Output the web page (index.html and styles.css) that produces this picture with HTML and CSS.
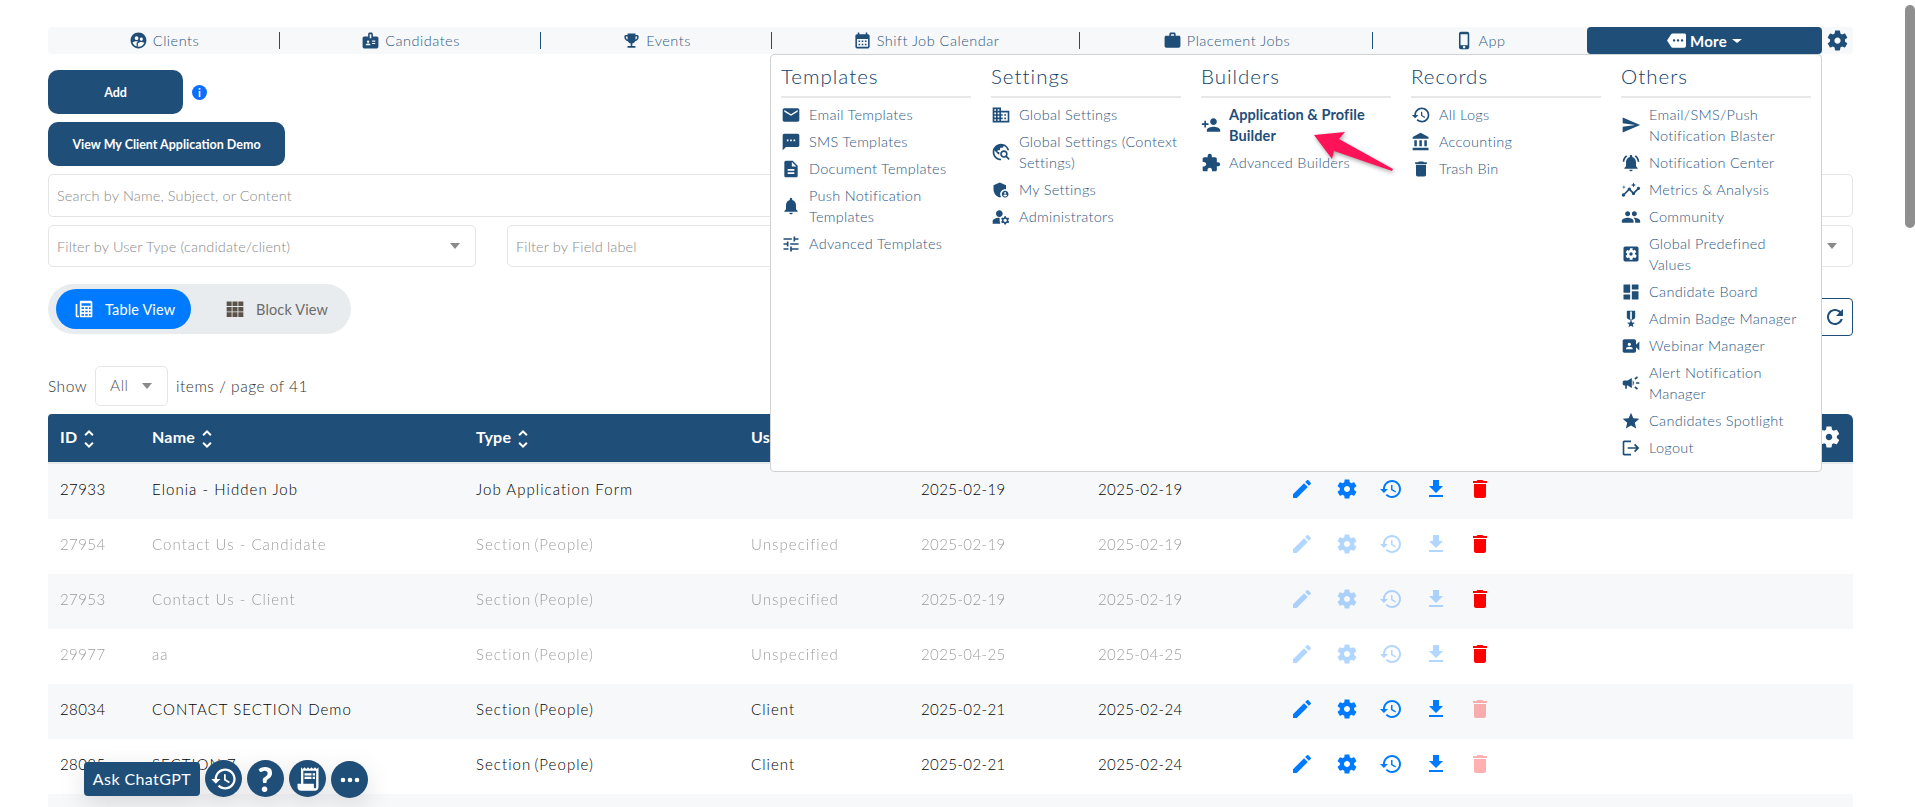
FILE: index.html
```html
<!DOCTYPE html>
<html lang="en">
<head>
<meta charset="utf-8">
<title>Application Builders</title>
<link rel="stylesheet" href="styles.css">
</head>
<body>
<svg class="sprite" aria-hidden="true">
<symbol id="i-clients" viewBox="0 0 24 24"><path d="M11.99 2c-5.52 0-10 4.48-10 10s4.48 10 10 10 10-4.48 10-10-4.48-10-10-10zm3.61 6.34c1.07 0 1.93.86 1.93 1.93 0 1.07-.86 1.93-1.93 1.93-1.07 0-1.93-.86-1.93-1.93-.01-1.07.86-1.93 1.93-1.93zm-6-1.58c1.3 0 2.36 1.06 2.36 2.36 0 1.3-1.06 2.36-2.36 2.36s-2.36-1.06-2.36-2.36c0-1.31 1.05-2.36 2.36-2.36zm0 9.13v3.75c-2.4-.75-4.3-2.6-5.14-4.96 1.05-1.12 3.67-1.69 5.14-1.69.53 0 1.2.08 1.9.22-1.64.87-1.9 2.02-1.9 2.68zM11.99 20c-.27 0-.53-.01-.79-.04v-4.07c0-1.42 2.94-2.13 4.4-2.13 1.07 0 2.92.39 3.84 1.15-1.17 2.97-4.06 5.09-7.45 5.09z"/></symbol>
<symbol id="i-badge" viewBox="0 0 24 24"><path d="M20 7h-5V4c0-1.1-.9-2-2-2h-2c-1.1 0-2 .9-2 2v3H4c-1.1 0-2 .9-2 2v11c0 1.1.9 2 2 2h16c1.1 0 2-.9 2-2V9c0-1.1-.9-2-2-2zM9 12c.83 0 1.5.67 1.5 1.5S9.83 15 9 15s-1.5-.67-1.5-1.5S8.17 12 9 12zm3 6H6v-.75c0-1 2-1.5 3-1.5s3 .5 3 1.5V18zm1-9h-2V4h2v5zm5 7.5h-4V15h4v1.5zm0-3h-4V12h4v1.5z"/></symbol>
<symbol id="i-trophy" viewBox="0 0 24 24"><path d="M19 5h-2V3H7v2H5c-1.1 0-2 .9-2 2v1c0 2.55 1.92 4.63 4.39 4.94.63 1.5 1.98 2.63 3.61 2.96V19H7v2h10v-2h-4v-3.1c1.63-.33 2.98-1.46 3.61-2.96C19.08 12.63 21 10.55 21 8V7c0-1.1-.9-2-2-2zM5 8V7h2v3.82C5.84 10.4 5 9.3 5 8zm14 0c0 1.3-.84 2.4-2 2.82V7h2v1z"/></symbol>
<symbol id="i-calendar" viewBox="0 0 24 24"><path d="M19 4h-1V2h-2v2H8V2H6v2H5c-1.1 0-2 .9-2 2v14c0 1.1.9 2 2 2h14c1.1 0 2-.9 2-2V6c0-1.1-.9-2-2-2zm0 16H5V10h14v10zM9 14H7v-2h2v2zm4 0h-2v-2h2v2zm4 0h-2v-2h2v2zm-8 4H7v-2h2v2zm4 0h-2v-2h2v2zm4 0h-2v-2h2v2z"/></symbol>
<symbol id="i-work" viewBox="0 0 24 24"><path d="M20 6h-4V4c0-1.11-.89-2-2-2h-4c-1.11 0-2 .89-2 2v2H4c-1.11 0-1.99.89-1.99 2L2 19c0 1.11.89 2 2 2h16c1.11 0 2-.89 2-2V8c0-1.11-.89-2-2-2zm-6 0h-4V4h4v2z"/></symbol>
<symbol id="i-phone" viewBox="0 0 24 24"><path d="M15.5 1h-8C6.12 1 5 2.12 5 3.5v17C5 21.88 6.12 23 7.5 23h8c1.38 0 2.5-1.12 2.5-2.5v-17C18 2.12 16.88 1 15.5 1zm-4 21c-.83 0-1.5-.67-1.5-1.5s.67-1.5 1.5-1.5 1.5.67 1.5 1.5-.67 1.5-1.5 1.5zm4.5-4H7V4h9v14z"/></symbol>
<symbol id="i-more" viewBox="0 0 24 24"><path d="M22 3H7c-.69 0-1.23.35-1.59.88L0 12l5.41 8.11c.36.53.9.89 1.59.89h15c1.1 0 2-.9 2-2V5c0-1.1-.9-2-2-2zM9 13.5c-.83 0-1.5-.67-1.5-1.5s.67-1.5 1.5-1.5 1.5.67 1.5 1.5-.67 1.5-1.5 1.5zm5 0c-.83 0-1.5-.67-1.5-1.5s.67-1.5 1.5-1.5 1.5.67 1.5 1.5-.67 1.5-1.5 1.5zm5 0c-.83 0-1.5-.67-1.5-1.5s.67-1.5 1.5-1.5 1.5.67 1.5 1.5-.67 1.5-1.5 1.5z"/></symbol>
<symbol id="i-gear" viewBox="0 0 24 24"><path d="M19.14 12.94c.04-.3.06-.61.06-.94 0-.32-.02-.64-.07-.94l2.03-1.58c.18-.14.23-.41.12-.61l-1.92-3.32c-.12-.22-.37-.29-.59-.22l-2.39.96c-.5-.38-1.03-.7-1.62-.94l-.36-2.54c-.04-.24-.24-.41-.48-.41h-3.84c-.24 0-.43.17-.47.41l-.36 2.54c-.59.24-1.13.57-1.62.94l-2.39-.96c-.22-.08-.47 0-.59.22L2.74 8.87c-.12.21-.08.47.12.61l2.03 1.58c-.05.3-.09.63-.09.94s.02.64.07.94l-2.03 1.58c-.18.14-.23.41-.12.61l1.92 3.32c.12.22.37.29.59.22l2.39-.96c.5.38 1.03.7 1.62.94l.36 2.54c.05.24.24.41.48.41h3.84c.24 0 .44-.17.47-.41l.36-2.54c.59-.24 1.13-.56 1.62-.94l2.39.96c.22.08.47 0 .59-.22l1.92-3.32c.12-.22.07-.47-.12-.61l-2.01-1.58zM12 15c-1.65 0-3-1.35-3-3s1.35-3 3-3 3 1.35 3 3-1.35 3-3 3z"/></symbol>
<symbol id="i-email" viewBox="0 0 24 24"><path d="M20 4H4c-1.1 0-1.99.9-1.99 2L2 18c0 1.1.9 2 2 2h16c1.1 0 2-.9 2-2V6c0-1.1-.9-2-2-2zm0 4l-8 5-8-5V6l8 5 8-5v2z"/></symbol>
<symbol id="i-sms" viewBox="0 0 24 24"><path d="M20 2H4c-1.1 0-1.99.9-1.99 2L2 22l4-4h14c1.1 0 2-.9 2-2V4c0-1.1-.9-2-2-2zM9 11H7V9h2v2zm4 0h-2V9h2v2zm4 0h-2V9h2v2z"/></symbol>
<symbol id="i-doc" viewBox="0 0 24 24"><path d="M14 2H6c-1.1 0-1.99.9-1.99 2L4 20c0 1.1.89 2 1.99 2H18c1.1 0 2-.9 2-2V8l-6-6zm2 16H8v-2h8v2zm0-4H8v-2h8v2zm-3-5V3.5L18.5 9H13z"/></symbol>
<symbol id="i-bell" viewBox="0 0 24 24"><path d="M12 22c1.1 0 2-.9 2-2h-4c0 1.1.89 2 2 2zm6-6v-5c0-3.07-1.64-5.64-4.5-6.32V4c0-.83-.67-1.5-1.5-1.5s-1.5.67-1.5 1.5v.68C7.63 5.36 6 7.92 6 11v5l-2 2v1h16v-1l-2-2z"/></symbol>
<symbol id="i-tune" viewBox="0 0 24 24"><path d="M3 17v2h6v-2H3zM3 5v2h10V5H3zm10 16v-2h8v-2h-8v-2h-2v6h2zM7 9v2H3v2h4v2h2V9H7zm14 4v-2H11v2h10zm-6-4h2V7h4V5h-4V3h-2v6z"/></symbol>
<symbol id="i-domain" viewBox="0 0 24 24"><path d="M12 7V3H2v18h20V7H12zM6 19H4v-2h2v2zm0-4H4v-2h2v2zm0-4H4V9h2v2zm0-4H4V5h2v2zm4 12H8v-2h2v2zm0-4H8v-2h2v2zm0-4H8V9h2v2zm0-4H8V5h2v2zm10 12h-8v-2h2v-2h-2v-2h2v-2h-2V9h8v10zm-2-8h-2v2h2v-2zm0 4h-2v2h2v-2z"/></symbol>
<symbol id="i-explore" viewBox="0 0 24 24"><path d="M19.3 16.9c.4-.7.7-1.5.7-2.4 0-2.5-2-4.5-4.5-4.5S11 12 11 14.5s2 4.5 4.5 4.5c.9 0 1.7-.3 2.4-.7l3.2 3.2 1.4-1.4-3.2-3.2zm-3.8.1c-1.4 0-2.5-1.1-2.5-2.5s1.1-2.5 2.5-2.5 2.5 1.1 2.5 2.5-1.1 2.5-2.5 2.5zM12 20v2C6.48 22 2 17.52 2 12S6.48 2 12 2c4.84 0 8.87 3.44 9.8 8h-2.07c-.64-2.46-2.4-4.47-4.73-5.41V5c0 1.1-.9 2-2 2h-2v2c0 .55-.45 1-1 1H8v2h2v3H9l-4.79-4.79C4.08 10.79 4 11.38 4 12c0 4.41 3.59 8 8 8z"/></symbol>
<symbol id="i-shield" viewBox="0 0 24 24"><path d="M17 11c.34 0 .67.04 1 .09V6.27L10.5 3 3 6.27v4.91c0 4.54 3.2 8.79 7.5 9.82.55-.13 1.08-.32 1.6-.55-.69-.98-1.1-2.17-1.1-3.45 0-3.31 2.69-6 6-6zm0 2c-2.21 0-4 1.79-4 4s1.79 4 4 4 4-1.79 4-4-1.79-4-4-4zm0 1.38c.62 0 1.12.51 1.12 1.12s-.51 1.12-1.12 1.12-1.12-.51-1.12-1.12.5-1.12 1.12-1.12zm0 5.37c-.93 0-1.74-.46-2.24-1.17.05-.72 1.51-1.08 2.24-1.08s2.19.36 2.24 1.08c-.5.71-1.31 1.17-2.24 1.17z"/></symbol>
<symbol id="i-admin" viewBox="0 0 24 24"><path d="M10 12c2.21 0 4-1.79 4-4s-1.79-4-4-4-4 1.79-4 4 1.79 4 4 4zm-.67 1.01C6.6 13.13 2 14.5 2 17v3h9.26c-.75-1.33-1-3.9-.93-6.99zM20.75 16c0-.22-.03-.42-.06-.63l1.14-1.01-1-1.73-1.45.49c-.32-.27-.68-.48-1.08-.63L18 11h-2l-.3 1.49c-.4.15-.76.36-1.08.63l-1.45-.49-1 1.73 1.14 1.01c-.03.21-.06.41-.06.63s.03.42.06.63l-1.14 1.01 1 1.73 1.45-.49c.32.27.68.48 1.08.63L16 21h2l.3-1.49c.4-.15.76-.36 1.08-.63l1.45.49 1-1.73-1.14-1.01c.03-.21.06-.41.06-.63zM17 18c-1.1 0-2-.9-2-2s.9-2 2-2 2 .9 2 2-.9 2-2 2z"/></symbol>
<symbol id="i-personadd" viewBox="0 0 24 24"><path d="M15 12c2.21 0 4-1.79 4-4s-1.79-4-4-4-4 1.79-4 4 1.79 4 4 4zm-9-2V7H4v3H1v2h3v3h2v-3h3v-2H6zm9 4c-2.67 0-8 1.34-8 4v2h16v-2c0-2.66-5.33-4-8-4z"/></symbol>
<symbol id="i-puzzle" viewBox="0 0 24 24"><path d="M20.5 11H19V7c0-1.1-.9-2-2-2h-4V3.5C13 2.12 11.88 1 10.5 1S8 2.12 8 3.5V5H4c-1.1 0-1.99.9-1.99 2v3.8H3.5c1.49 0 2.7 1.21 2.7 2.7s-1.21 2.7-2.7 2.7H2V20c0 1.1.9 2 2 2h3.8v-1.5c0-1.49 1.21-2.7 2.7-2.7 1.49 0 2.7 1.21 2.7 2.7V22H17c1.1 0 2-.9 2-2v-4h1.5c1.38 0 2.5-1.12 2.5-2.5S21.88 11 20.5 11z"/></symbol>
<symbol id="i-history" viewBox="0 0 24 24"><path d="M13 3c-4.97 0-9 4.03-9 9H1l3.89 3.89.07.14L9 12H6c0-3.87 3.13-7 7-7s7 3.13 7 7-3.13 7-7 7c-1.93 0-3.68-.79-4.94-2.06l-1.42 1.42C8.27 19.99 10.51 21 13 21c4.97 0 9-4.03 9-9s-4.03-9-9-9zm-1 5v5l4.28 2.54.72-1.21-3.5-2.08V8H12z"/></symbol>
<symbol id="i-bank" viewBox="0 0 24 24"><path d="M4 10v7h3v-7H4zm6 0v7h3v-7h-3zM2 22h19v-3H2v3zm14-12v7h3v-7h-3zm-4.5-9L2 6v2h19V6l-9.5-5z"/></symbol>
<symbol id="i-trash" viewBox="0 0 24 24"><path d="M6 19c0 1.1.9 2 2 2h8c1.1 0 2-.9 2-2V7H6v12zM19 4h-3.5l-1-1h-5l-1 1H5v2h14V4z"/></symbol>
<symbol id="i-send" viewBox="0 0 24 24"><path d="M2.01 21L23 12 2.01 3 2 10l15 2-15 2z"/></symbol>
<symbol id="i-bellactive" viewBox="0 0 24 24"><path d="M7.58 4.08L6.15 2.65C3.75 4.48 2.17 7.3 2.03 10.5h2c.15-2.65 1.51-4.97 3.55-6.42zm12.39 6.42h2c-.15-3.2-1.73-6.02-4.12-7.85l-1.42 1.43c2.02 1.45 3.39 3.77 3.54 6.42zM18 11c0-3.07-1.64-5.64-4.5-6.32V4c0-.83-.67-1.5-1.5-1.5s-1.5.67-1.5 1.5v.68C7.63 5.36 6 7.92 6 11v5l-2 2v1h16v-1l-2-2v-5zm-6 11c.14 0 .27-.01.4-.04.65-.14 1.18-.58 1.44-1.18.1-.24.15-.5.15-.78h-4c.01 1.1.9 2 2.01 2z"/></symbol>
<symbol id="i-insights" viewBox="0 0 24 24"><path d="M21 8c-1.45 0-2.26 1.44-1.93 2.51l-3.55 3.56c-.3-.09-.74-.09-1.04 0l-2.55-2.55C12.27 10.45 11.46 9 10 9c-1.45 0-2.27 1.44-1.93 2.52l-4.56 4.55C2.44 15.74 1 16.55 1 18c0 1.1.9 2 2 2 1.45 0 2.26-1.44 1.93-2.51l4.55-4.56c.3.09.74.09 1.04 0l2.55 2.55C12.73 16.55 13.54 18 15 18c1.45 0 2.27-1.44 1.93-2.52l3.56-3.55c1.07.33 2.51-.48 2.51-1.93 0-1.1-.9-2-2-2zM15 9l.94-2.07L18 6l-2.06-.93L15 3l-.92 2.07L12 6l2.08.93zM3.5 11L4 9l2-.5L4 8l-.5-2L3 8l-2 .5L3 9z"/></symbol>
<symbol id="i-people" viewBox="0 0 24 24"><path d="M16 11c1.66 0 2.99-1.34 2.99-3S17.66 5 16 5c-1.66 0-3 1.34-3 3s1.34 3 3 3zm-8 0c1.66 0 2.99-1.34 2.99-3S9.66 5 8 5C6.34 5 5 6.34 5 8s1.34 3 3 3zm0 2c-2.33 0-7 1.17-7 3.5V19h14v-2.5c0-2.33-4.67-3.5-7-3.5zm8 0c-.29 0-.62.02-.97.05 1.16.84 1.97 1.97 1.97 3.45V19h6v-2.5c0-2.33-4.67-3.5-7-3.5z"/></symbol>
<symbol id="i-gearbox" viewBox="0 0 24 24"><path d="M12 10c-1.1 0-2 .9-2 2s.9 2 2 2 2-.9 2-2-.9-2-2-2zm7-7H5c-1.11 0-2 .9-2 2v14c0 1.1.89 2 2 2h14c1.11 0 2-.9 2-2V5c0-1.1-.89-2-2-2zm-1.75 9c0 .23-.02.46-.05.68l1.48 1.16c.13.11.17.3.08.45l-1.4 2.42c-.09.15-.27.21-.43.15l-1.74-.7c-.36.28-.76.51-1.18.69l-.26 1.85c-.03.17-.18.3-.35.3h-2.8c-.17 0-.32-.13-.35-.3L10.5 17c-.43-.18-.82-.41-1.18-.69l-1.74.7c-.16.06-.34 0-.43-.15l-1.4-2.42c-.09-.15-.05-.34.08-.45l1.48-1.16c-.03-.22-.05-.45-.05-.68 0-.23.02-.46.05-.68l-1.48-1.16c-.13-.11-.17-.3-.08-.45l1.4-2.42c.09-.15.27-.21.43-.15l1.74.7c.36-.28.76-.51 1.18-.69l.26-1.85c.03-.17.18-.3.35-.3h2.8c.17 0 .32.13.35.3L13.5 7c.43.18.82.41 1.18.69l1.74-.7c.16-.06.34 0 .43.15l1.4 2.42c.09.15.05.34-.08.45l-1.48 1.16c.03.22.05.45.05.68z"/></symbol>
<symbol id="i-dashboard" viewBox="0 0 24 24"><path d="M3 13h8V3H3v10zm0 8h8v-6H3v6zm10 0h8V11h-8v10zm0-18v6h8V3h-8z"/></symbol>
<symbol id="i-medal" viewBox="0 0 24 24"><path d="M17 10.43V2H7v8.43c0 .35.18.68.49.86l4.18 2.51-.99 2.34-3.41.29 2.59 2.24L9.07 22 12 20.23 14.93 22l-.78-3.33 2.59-2.24-3.41-.29-.99-2.34 4.18-2.51c.3-.18.48-.5.48-.86zm-4 1.8l-1 .6-1-.6V3h2v9.23z"/></symbol>
<symbol id="i-video" viewBox="0 0 24 24"><path d="M18 10.48V6c0-1.1-.9-2-2-2H4c-1.1 0-2 .9-2 2v12c0 1.1.9 2 2 2h12c1.1 0 2-.9 2-2v-4.48l4 3.98v-11l-4 3.98zM10 8c1.1 0 2 .9 2 2s-.9 2-2 2-2-.9-2-2 .9-2 2-2zm4 8H6v-.57c0-.81.48-1.53 1.22-1.85.85-.37 1.79-.58 2.78-.58.99 0 1.93.21 2.78.58.74.32 1.22 1.04 1.22 1.85V16z"/></symbol>
<symbol id="i-campaign" viewBox="0 0 24 24"><path d="M18 11v2h4v-2h-4zm-2 6.61c.96.71 2.21 1.65 3.2 2.39.4-.53.8-1.07 1.2-1.6-.99-.74-2.24-1.68-3.2-2.4-.4.54-.8 1.08-1.2 1.61zM20.4 5.6c-.4-.53-.8-1.07-1.2-1.6-.99.74-2.24 1.68-3.2 2.4.4.53.8 1.07 1.2 1.6.96-.72 2.21-1.65 3.2-2.4zM4 9c-1.1 0-2 .9-2 2v2c0 1.1.9 2 2 2h1v4h2v-4h1l5 3V6L8 9H4zm11.5 3c0-1.33-.58-2.53-1.5-3.35v6.69c.92-.81 1.5-2.01 1.5-3.34z"/></symbol>
<symbol id="i-star" viewBox="0 0 24 24"><path d="M12 17.27L18.18 21l-1.64-7.03L22 9.24l-7.19-.61L12 2 9.19 8.63 2 9.24l5.46 4.73L5.82 21z"/></symbol>
<symbol id="i-logout" viewBox="0 0 24 24"><path d="M17 7l-1.41 1.41L18.17 11H8v2h10.17l-2.58 2.58L17 17l5-5zM4 5h8V3H4c-1.1 0-2 .9-2 2v14c0 1.1.9 2 2 2h8v-2H4V5z"/></symbol>
<symbol id="i-edit" viewBox="0 0 24 24"><path d="M3 17.25V21h3.75L17.81 9.94l-3.75-3.75L3 17.25zM20.71 7.04c.39-.39.39-1.02 0-1.41l-2.34-2.34c-.39-.39-1.02-.39-1.41 0l-1.83 1.83 3.75 3.75 1.83-1.83z"/></symbol>
<symbol id="i-download" viewBox="0 0 24 24"><path d="M19 9h-4V3H9v6H5l7 7 7-7zM5 18v2h14v-2H5z"/></symbol>
<symbol id="i-refresh" viewBox="0 0 24 24"><path d="M17.65 6.35C16.2 4.9 14.21 4 12 4c-4.42 0-7.99 3.58-7.99 8s3.57 8 7.99 8c3.73 0 6.84-2.55 7.73-6h-2.08c-.82 2.33-3.04 4-5.65 4-3.31 0-6-2.69-6-6s2.69-6 6-6c1.66 0 3.14.69 4.22 1.78L13 11h7V4l-2.35 2.35z"/></symbol>
<symbol id="i-sort" viewBox="0 0 24 24"><path d="M12 5.83L15.17 9l1.41-1.41L12 3 7.41 7.59 8.83 9 12 5.83zm0 12.34L8.83 15l-1.41 1.41L12 21l4.59-4.59L15.17 15 12 18.17z"/></symbol>
<symbol id="i-table" viewBox="0 0 24 24"><path d="M4 6H2v14c0 1.1.9 2 2 2h2v-2H4V6zM8 2h12c1.1 0 2 .9 2 2v17c0 .6-.4 1-1 1H8c-.6 0-1-.4-1-1V3c0-.6.4-1 1-1zm1 3v3h11V5H9zm0 5v2h3v-2H9zm4.5 0v2h3v-2h-3zm4.5 0v2h2v-2h-2zM9 14v2h3v-2H9zm4.5 0v2h3v-2h-3zm4.5 0v2h2v-2h-2zM9 18v2h3v-2H9zm4.5 0v2h3v-2h-3zm4.5 0v2h2v-2h-2z"/></symbol>
<symbol id="i-grid" viewBox="0 0 24 24"><path d="M2 3h6v5.5H2zM9 3h6v5.5H9zM16 3h6v5.5h-6zM2 9.5h6V15H2zM9 9.5h6V15H9zM16 9.5h6V15h-6zM2 16h6v5.5H2zM9 16h6v5.5H9zM16 16h6v5.5h-6z"/></symbol>
<symbol id="i-receipt" viewBox="0 0 24 24"><path d="M19.5 3.5L18 2l-1.5 1.5L15 2l-1.5 1.5L12 2l-1.5 1.5L9 2 7.5 3.5 6 2v14H3v3c0 1.66 1.34 3 3 3h12c1.66 0 3-1.34 3-3V2l-1.5 1.5zM19 19c0 .55-.45 1-1 1s-1-.45-1-1v-3H8V5h11v14zM9 7h6v2H9zm7 0h2v2h-2zM9 10h6v2H9zm7 0h2v2h-2z"/></symbol>
<symbol id="i-dots" viewBox="0 0 24 24"><path d="M6 10a2 2 0 1 0 0 4 2 2 0 0 0 0-4zm12 0a2 2 0 1 0 0 4 2 2 0 0 0 0-4zm-6 0a2 2 0 1 0 0 4 2 2 0 0 0 0-4z"/></symbol>
</svg>

<div class="page">
  <nav class="nav">
    <a class="nav-item"><svg class="ico"><use href="#i-clients"/></svg>Clients</a>
    <a class="nav-item"><svg class="ico"><use href="#i-badge"/></svg>Candidates</a>
    <a class="nav-item"><svg class="ico"><use href="#i-trophy"/></svg>Events</a>
    <a class="nav-item"><svg class="ico"><use href="#i-calendar"/></svg>Shift Job Calendar</a>
    <a class="nav-item"><svg class="ico"><use href="#i-work"/></svg>Placement Jobs</a>
    <a class="nav-item nav-item-last"><svg class="ico"><use href="#i-phone"/></svg>App</a>
    <a class="nav-more"><svg class="ico"><use href="#i-more"/></svg>More<span class="caret caret-white"></span></a>
    <a class="nav-gear"><svg class="ico-gear"><use href="#i-gear"/></svg></a>

    <div class="menu">
      <section class="menu-col">
        <h3>Templates</h3>
        <ul>
          <li><svg class="ico-m"><use href="#i-email"/></svg><span>Email Templates</span></li>
          <li><svg class="ico-m"><use href="#i-sms"/></svg><span>SMS Templates</span></li>
          <li><svg class="ico-m"><use href="#i-doc"/></svg><span>Document Templates</span></li>
          <li><svg class="ico-m"><use href="#i-bell"/></svg><span>Push Notification<br>Templates</span></li>
          <li><svg class="ico-m"><use href="#i-tune"/></svg><span>Advanced Templates</span></li>
        </ul>
      </section>
      <section class="menu-col">
        <h3>Settings</h3>
        <ul>
          <li><svg class="ico-m"><use href="#i-domain"/></svg><span>Global Settings</span></li>
          <li><svg class="ico-m"><use href="#i-explore"/></svg><span>Global Settings (Context<br>Settings)</span></li>
          <li><svg class="ico-m"><use href="#i-shield"/></svg><span>My Settings</span></li>
          <li><svg class="ico-m"><use href="#i-admin"/></svg><span>Administrators</span></li>
        </ul>
      </section>
      <section class="menu-col">
        <h3>Builders</h3>
        <ul>
          <li class="active"><svg class="ico-m"><use href="#i-personadd"/></svg><span>Application &amp; Profile<br>Builder</span></li>
          <li><svg class="ico-m"><use href="#i-puzzle"/></svg><span>Advanced Builders</span></li>
        </ul>
      </section>
      <section class="menu-col">
        <h3>Records</h3>
        <ul>
          <li><svg class="ico-m"><use href="#i-history"/></svg><span>All Logs</span></li>
          <li><svg class="ico-m"><use href="#i-bank"/></svg><span>Accounting</span></li>
          <li><svg class="ico-m"><use href="#i-trash"/></svg><span>Trash Bin</span></li>
        </ul>
      </section>
      <section class="menu-col">
        <h3>Others</h3>
        <ul>
          <li><svg class="ico-m"><use href="#i-send"/></svg><span>Email/SMS/Push<br>Notification Blaster</span></li>
          <li><svg class="ico-m"><use href="#i-bellactive"/></svg><span>Notification Center</span></li>
          <li><svg class="ico-m"><use href="#i-insights"/></svg><span>Metrics &amp; Analysis</span></li>
          <li><svg class="ico-m"><use href="#i-people"/></svg><span>Community</span></li>
          <li><svg class="ico-m"><use href="#i-gearbox"/></svg><span>Global Predefined<br>Values</span></li>
          <li><svg class="ico-m"><use href="#i-dashboard"/></svg><span>Candidate Board</span></li>
          <li><svg class="ico-m"><use href="#i-medal"/></svg><span>Admin Badge Manager</span></li>
          <li><svg class="ico-m"><use href="#i-video"/></svg><span>Webinar Manager</span></li>
          <li><svg class="ico-m"><use href="#i-campaign"/></svg><span>Alert Notification<br>Manager</span></li>
          <li><svg class="ico-m"><use href="#i-star"/></svg><span>Candidates Spotlight</span></li>
          <li><svg class="ico-m"><use href="#i-logout"/></svg><span>Logout</span></li>
        </ul>
      </section>
    </div>
  </nav>

  <div class="add-row">
    <button class="btn btn-add">Add</button>
    <span class="info">i</span>
  </div>
  <button class="btn btn-demo">View My Client Application Demo</button>

  <div class="field field-search">Search by Name, Subject, or Content</div>

  <div class="filters">
    <div class="field">Filter by User Type (candidate/client)<span class="caret"></span></div>
    <div class="field">Filter by Field label</div>
    <div class="field"></div>
    <div class="field"><span class="caret"></span></div>
  </div>

  <div class="view-row">
    <div class="toggle">
      <span class="tg tg-on"><svg class="ico-t"><use href="#i-table"/></svg>Table View</span>
      <span class="tg tg-off"><svg class="ico-t"><use href="#i-grid"/></svg>Block View</span>
    </div>
    <button class="refresh"><svg class="ico-r"><use href="#i-refresh"/></svg></button>
  </div>

  <div class="pager">
    <span>Show</span>
    <span class="select">All<span class="caret"></span></span>
    <span>items / page of 41</span>
  </div>

  <table class="grid">
    <colgroup>
      <col class="c-id"><col class="c-name"><col class="c-type"><col class="c-user"><col class="c-d1"><col class="c-d2"><col>
    </colgroup>
    <thead>
      <tr>
        <th>ID<svg class="ico-s"><use href="#i-sort"/></svg></th>
        <th>Name<svg class="ico-s"><use href="#i-sort"/></svg></th>
        <th>Type<svg class="ico-s"><use href="#i-sort"/></svg></th>
        <th>User Type<svg class="ico-s"><use href="#i-sort"/></svg></th>
        <th>Created</th>
        <th>Updated</th>
        <th class="th-gear"><svg class="ico-hg"><use href="#i-gear"/></svg></th>
      </tr>
    </thead>
    <tbody>
      <tr>
        <td>27933</td><td>Elonia - Hidden Job</td><td>Job Application Form</td><td></td><td>2025-02-19</td><td>2025-02-19</td>
        <td class="acts"><div class="acts-in"><svg class="a a-b"><use href="#i-edit"/></svg><svg class="a a-b"><use href="#i-gear"/></svg><svg class="a a-b"><use href="#i-history"/></svg><svg class="a a-b"><use href="#i-download"/></svg><svg class="a a-r"><use href="#i-trash"/></svg></div></td>
      </tr>
      <tr class="muted">
        <td><span>27954</span></td><td><span>Contact Us - Candidate</span></td><td><span class="sect">Section (People)</span></td><td><span>Unspecified</span></td><td><span>2025-02-19</span></td><td><span>2025-02-19</span></td>
        <td class="acts"><div class="acts-in"><svg class="a a-b a-dim"><use href="#i-edit"/></svg><svg class="a a-b a-dim"><use href="#i-gear"/></svg><svg class="a a-b a-dim"><use href="#i-history"/></svg><svg class="a a-b a-dim"><use href="#i-download"/></svg><svg class="a a-r"><use href="#i-trash"/></svg></div></td>
      </tr>
      <tr class="muted">
        <td><span>27953</span></td><td><span>Contact Us - Client</span></td><td><span class="sect">Section (People)</span></td><td><span>Unspecified</span></td><td><span>2025-02-19</span></td><td><span>2025-02-19</span></td>
        <td class="acts"><div class="acts-in"><svg class="a a-b a-dim"><use href="#i-edit"/></svg><svg class="a a-b a-dim"><use href="#i-gear"/></svg><svg class="a a-b a-dim"><use href="#i-history"/></svg><svg class="a a-b a-dim"><use href="#i-download"/></svg><svg class="a a-r"><use href="#i-trash"/></svg></div></td>
      </tr>
      <tr class="muted">
        <td><span>29977</span></td><td><span>aa</span></td><td><span class="sect">Section (People)</span></td><td><span>Unspecified</span></td><td><span>2025-04-25</span></td><td><span>2025-04-25</span></td>
        <td class="acts"><div class="acts-in"><svg class="a a-b a-dim"><use href="#i-edit"/></svg><svg class="a a-b a-dim"><use href="#i-gear"/></svg><svg class="a a-b a-dim"><use href="#i-history"/></svg><svg class="a a-b a-dim"><use href="#i-download"/></svg><svg class="a a-r"><use href="#i-trash"/></svg></div></td>
      </tr>
      <tr>
        <td>28034</td><td>CONTACT SECTION Demo</td><td><span class="sect">Section (People)</span></td><td>Client</td><td>2025-02-21</td><td>2025-02-24</td>
        <td class="acts"><div class="acts-in"><svg class="a a-b"><use href="#i-edit"/></svg><svg class="a a-b"><use href="#i-gear"/></svg><svg class="a a-b"><use href="#i-history"/></svg><svg class="a a-b"><use href="#i-download"/></svg><svg class="a a-r a-dim"><use href="#i-trash"/></svg></div></td>
      </tr>
      <tr>
        <td>28035</td><td>SECTION 7</td><td><span class="sect">Section (People)</span></td><td>Client</td><td>2025-02-21</td><td>2025-02-24</td>
        <td class="acts"><div class="acts-in"><svg class="a a-b"><use href="#i-edit"/></svg><svg class="a a-b"><use href="#i-gear"/></svg><svg class="a a-b"><use href="#i-history"/></svg><svg class="a a-b"><use href="#i-download"/></svg><svg class="a a-r a-dim"><use href="#i-trash"/></svg></div></td>
      </tr>
      <tr><td colspan="7"></td></tr>
    </tbody>
  </table>
</div>

<svg class="pointer" viewBox="0 0 96 56" aria-hidden="true"><polygon points="8,13 39,10 33,17 87,47 86,49 28,29 26,37"/></svg>

<div class="float-bar">
  <button class="ask">Ask ChatGPT</button>
  <span class="round"><svg class="ico-f"><use href="#i-history"/></svg></span>
  <span class="round round-q">?</span>
  <span class="round"><svg class="ico-f"><use href="#i-receipt"/></svg></span>
  <span class="round round-low"><svg class="ico-f"><use href="#i-dots"/></svg></span>
</div>

<div class="scroll-thumb"></div>
</body>
</html>
```

FILE: styles.css
```css
* { box-sizing: border-box; }
html, body { margin: 0; height: 807px; overflow: hidden; background: #fff; }
body { font-family: Lato, "Noto Sans", sans-serif; color: #222; font-size: 15px; letter-spacing: .3px; }
.sprite { display: none; }
ul { list-style: none; margin: 0; padding: 0; }
button { font: inherit; letter-spacing: inherit; border: 0; padding: 0; }

.page { padding: 27px 62px 0 48px; display: flex; flex-direction: column; }

/* top nav */
.nav { position: relative; display: grid; grid-template-columns: 232px 261px 231px 308px 293px 214px 235px 31px; height: 27px; background: #f7f8fa; border-radius: 4px; }
.nav-item { position: relative; display: flex; align-items: center; justify-content: center; gap: 5px; color: #2f587f; font-size: 14.5px; font-weight: 300; letter-spacing: .5px; }
.nav-item::after { content: ""; position: absolute; right: 0; top: 5px; height: 17px; width: 1px; background: #1f4e79; }
.nav-item-last::after { display: none; }
.ico { width: 19px; height: 19px; fill: #1f4e79; flex: none; }
.nav-more { display: flex; align-items: center; justify-content: center; gap: 4px; background: #1f4e79; color: #fff; font-weight: 700; font-size: 15px; border-radius: 4px; }
.nav-more .ico { fill: #fff; width: 19px; height: 19px; }
.nav-gear { display: flex; align-items: center; justify-content: center; padding-right: 1px; }
.ico-gear { width: 25px; height: 25px; fill: #1f4e79; }

/* dropdown */
.menu { position: absolute; z-index: 10; left: 722px; top: 27px; width: 1052px; height: 418px; display: flex; gap: 20px; padding: 0 10px; background: #fff; border: 1px solid #d0d2d4; border-radius: 4px; }
.menu-col { width: 190px; flex: none; }
.menu-col h3 { margin: 0 0 6px; height: 43px; padding-top: 6px; font-size: 20.5px; line-height: 30px; font-weight: 300; color: #12406b; border-bottom: 2px solid #e6e7e9; letter-spacing: 1px; }
.menu-col ul { display: flex; flex-direction: column; gap: 6px; }
.menu-col li { display: flex; align-items: center; gap: 8px; font-size: 14.5px; font-weight: 300; line-height: 21px; color: #2f587f; white-space: nowrap; letter-spacing: .3px; }
.menu-col li.active { color: #1f4e79; font-weight: 700; letter-spacing: .1px; }
.ico-m { width: 20px; height: 20px; fill: #1f4e79; flex: none; }

/* buttons */
.add-row { display: flex; align-items: center; gap: 9px; margin-top: 16px; }
.btn { height: 44px; background: #1f4e79; color: #fff; border-radius: 10px; font-weight: 700; font-size: 12.5px; letter-spacing: 0; }
.btn-add { width: 135px; }
.btn-demo { width: 237px; margin-top: 8px; }
.info { width: 15px; height: 15px; border-radius: 50%; background: #0d6efd; color: #fff; font-size: 11px; line-height: 15px; text-align: center; font-weight: 700; }

/* fields */
.field { position: relative; height: 42px; display: flex; align-items: center; padding: 0 8px; border: 1px solid #e4e5e7; border-radius: 5px; color: #8a8a8a; font-size: 14.5px; font-weight: 300; letter-spacing: .15px; background: #fff; }
.field-search { height: 43px; margin-top: 8px; }
.filters { display: grid; grid-template-columns: repeat(4, 428px); column-gap: 31px; margin-top: 8px; }
.caret { display: inline-block; width: 0; height: 0; border-left: 5px solid transparent; border-right: 5px solid transparent; border-top: 6px solid #8a8a8a; }
.field .caret { position: absolute; right: 15px; top: 17px; }
.caret-white { border-top-color: #fff; border-left-width: 5px; border-right-width: 5px; border-top-width: 4px; margin-left: 1px; }

/* view toggle */
.view-row { display: flex; justify-content: space-between; align-items: flex-start; margin-top: 17px; height: 52px; }
.toggle { width: 303px; height: 50px; padding: 5px 8px; display: flex; background: #e9ecef; border-radius: 25px; }
.tg { display: flex; align-items: center; height: 40px; font-size: 14.5px; letter-spacing: .15px; }
.tg-on { width: 135px; padding-left: 18px; gap: 11px; color: #fff; background: #007bff; border-radius: 20px; }
.tg-off { padding-left: 34px; gap: 11px; color: #6b6b6b; }
.ico-t { width: 20px; height: 20px; flex: none; }
.tg-on .ico-t { fill: #fff; }
.tg-off .ico-t { fill: #5b5349; }
.refresh { width: 40px; height: 38px; margin-top: 14px; background: #fff; border: 1px solid #1f4e79; border-radius: 4px; display: flex; align-items: center; justify-content: flex-end; padding-right: 5px; }
.ico-r { width: 24px; height: 24px; fill: #1f4e79; }

/* pager */
.pager { display: flex; align-items: center; margin-top: 30px; height: 40px; gap: 8px; color: #333; font-size: 15.5px; font-weight: 300; letter-spacing: .5px; }
.select { position: relative; width: 73px; height: 40px; padding-left: 14px; line-height: 36px; border: 1px solid #e4e5e7; border-radius: 5px; color: #555; }
.select .caret { position: absolute; left: 46px; top: 16px; }

/* table */
.grid { width: 1805px; margin-top: 8px; border-collapse: separate; border-spacing: 0; table-layout: fixed; }
.c-id { width: 92px; } .c-name { width: 324px; } .c-type { width: 275px; } .c-user { width: 170px; } .c-d1 { width: 177px; } .c-d2 { width: 190px; }
.grid th { height: 50px; padding: 2px 0 0 12px; text-align: left; background: #1f4e79; color: #fff; font-weight: 700; font-size: 16px; letter-spacing: .2px; border-bottom: 2px solid #e6e8ea; white-space: nowrap; overflow: hidden; }
.grid th:last-child { border-top-right-radius: 6px; }
.grid th:first-child { border-top-left-radius: 4px; }
.ico-s { width: 24px; height: 24px; fill: #fff; vertical-align: middle; margin-left: 0; }
.grid th.th-gear { text-align: right; padding: 0 11px 2px 0; }
.ico-hg { width: 26px; height: 26px; fill: #fff; vertical-align: middle; }
.grid td { height: 55px; padding: 0 0 6px 12px; font-size: 15px; font-weight: 300; color: #000; white-space: nowrap; letter-spacing: .4px; }
.grid td:nth-child(2), .grid td:nth-child(3), .grid td:nth-child(4) { letter-spacing: 1.05px; }
.grid tbody tr:nth-child(odd) td { background: #f7f8fa; }
.muted td > span { opacity: .4; }
.sect { word-spacing: -2px; }
.grid td.acts { padding: 0 0 6px 0; }
.acts-in { display: grid; grid-template-columns: repeat(5, 44.5px); justify-items: center; align-items: center; margin-left: 4px; }
.a { width: 24px; height: 24px; }
.a-b { fill: #007bff; }
.a-r { fill: #ff0000; }
.a-dim { opacity: .3; }

/* annotation arrow */
.pointer { position: absolute; z-index: 20; left: 1306px; top: 122px; width: 96px; height: 56px; fill: #ff1358; filter: drop-shadow(1px 2px 2px rgba(0,0,0,.35)); }

/* floating bar */
.float-bar { position: fixed; z-index: 30; left: 84px; bottom: 10px; display: flex; align-items: center; gap: 5px; filter: drop-shadow(0 8px 12px rgba(0,0,0,.12)); }
.ask { width: 116px; height: 34px; background: #1f4e79; color: #fff; border-radius: 4px; font-size: 16px; letter-spacing: .4px; }
.round { width: 37px; height: 37px; border-radius: 50%; background: #1f4e79; display: flex; align-items: center; justify-content: center; color: #fff; }
.round-q { font-size: 34px; font-weight: 900; line-height: 37px; }
.round-low { position: relative; top: 1px; }
.ico-f { width: 28px; height: 28px; fill: #fff; }

/* page scrollbar */
.scroll-thumb { position: fixed; z-index: 40; right: 0; top: 5px; width: 10px; height: 223px; background: #8f8f8f; border-radius: 5px; }
```
